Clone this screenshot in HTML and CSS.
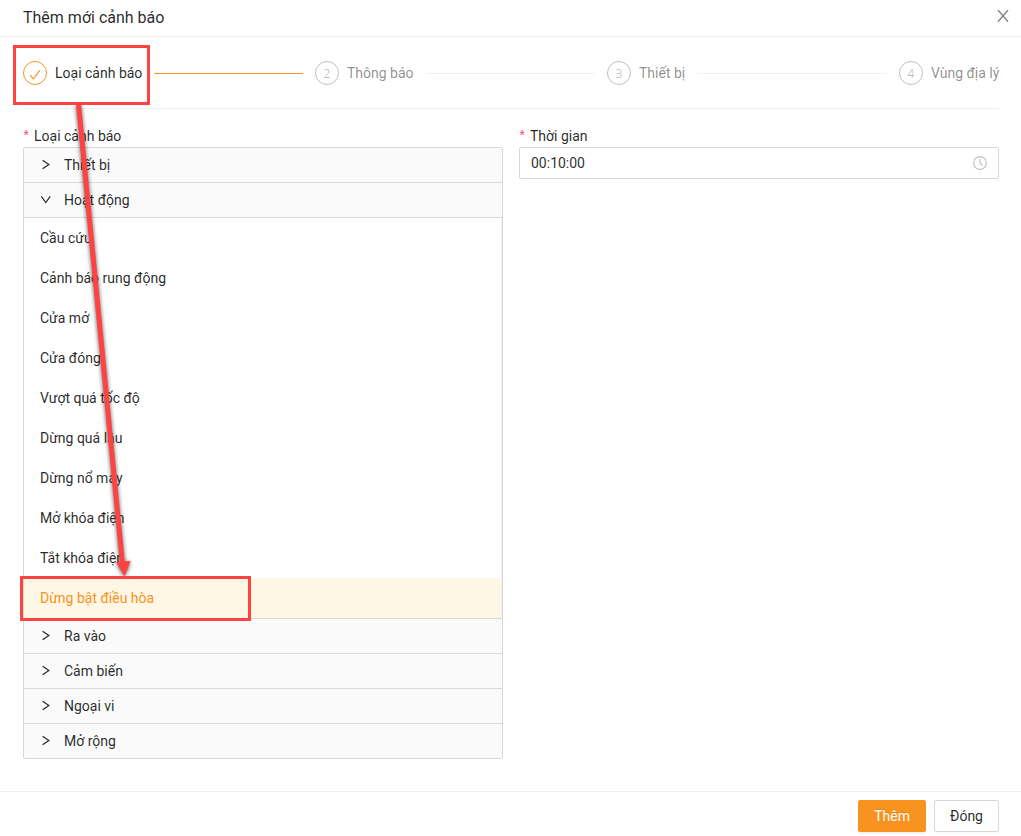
FILE: index.html
```html
<!DOCTYPE html>
<html lang="vi">
<head>
<meta charset="utf-8">
<title>Thêm mới cảnh báo</title>
<link rel="stylesheet" href="styles.css">
</head>
<body>
<svg class="defs" aria-hidden="true">
  <symbol id="right" viewBox="0 0 12 12"><path d="M2.6 1.3 8.9 5.5 2.6 9.8" fill="none" stroke="currentColor" stroke-width="1.15"/></symbol>
  <symbol id="down" viewBox="0 0 12 12"><path d="M1.3 2.4 5.8 8.5 10.3 2.4" fill="none" stroke="currentColor" stroke-width="1.15"/></symbol>
</svg>
<div class="modal">
  <header class="header">
    <h1 class="title">Thêm mới cảnh báo</h1>
    <svg class="close" width="12" height="13" viewBox="0 0 12 13"><path d="M1 0 11 11.8M11 0 1 11.8" fill="none" stroke="currentColor" stroke-width="1.4"/></svg>
  </header>
  <main class="body">
    <div class="steps">
      <div class="step step-active">
        <span class="step-icon"><svg width="12" height="12" viewBox="0 0 12 12"><path d="M1 7.1 4.3 10.9 10.9 2.3" fill="none" stroke="currentColor" stroke-width="1.15"/></svg></span>
        <span class="step-title">Loại cảnh báo</span><span class="step-tail"></span>
      </div>
      <div class="step"><span class="step-icon">2</span><span class="step-title">Thông báo</span><span class="step-tail"></span></div>
      <div class="step"><span class="step-icon">3</span><span class="step-title">Thiết bị</span><span class="step-tail"></span></div>
      <div class="step step-last"><span class="step-icon">4</span><span class="step-title">Vùng địa lý</span></div>
    </div>
    <div class="form">
      <div class="field">
        <div class="label"><span class="required">*</span>Loại cảnh báo</div>
        <div class="collapse">
          <div class="panel"><svg class="arrow"><use href="#right"/></svg>Thiết bị</div>
          <div class="panel"><svg class="arrow"><use href="#down"/></svg>Hoạt động</div>
          <ul class="menu">
            <li class="item">Cầu cứu</li>
            <li class="item">Cảnh báo rung động</li>
            <li class="item">Cửa mở</li>
            <li class="item">Cửa đóng</li>
            <li class="item">Vượt quá tốc độ</li>
            <li class="item">Dừng quá lâu</li>
            <li class="item">Dừng nổ máy</li>
            <li class="item">Mở khóa điện</li>
            <li class="item">Tắt khóa điện</li>
            <li class="item item-selected">Dừng bật điều hòa</li>
          </ul>
          <div class="panel"><svg class="arrow"><use href="#right"/></svg>Ra vào</div>
          <div class="panel"><svg class="arrow"><use href="#right"/></svg>Cảm biến</div>
          <div class="panel"><svg class="arrow"><use href="#right"/></svg>Ngoại vi</div>
          <div class="panel"><svg class="arrow"><use href="#right"/></svg>Mở rộng</div>
        </div>
      </div>
      <div class="field">
        <div class="label"><span class="required">*</span>Thời gian</div>
        <div class="time">00:10:00
          <svg width="14" height="14" viewBox="0 0 14 14"><g fill="none" stroke="currentColor" stroke-width="1.1"><circle cx="7" cy="7" r="6.4"/><path d="M7 3.2V7.3L9.7 9.3"/></g></svg>
        </div>
      </div>
    </div>
  </main>
  <footer class="footer">
    <button class="btn btn-primary">Thêm</button>
    <button class="btn">Đóng</button>
  </footer>
</div>
<svg class="annotation" width="1021" height="836" viewBox="0 0 1021 836">
  <g class="arrow-mark"><path d="M78.5 104 122.3 562" stroke="#ff4242" stroke-width="5"/><path d="M116 562 130.5 561 124.5 576.5Z" fill="#ff4242"/></g>
  <g fill="none" stroke="#ff4242" stroke-width="3"><rect x="14.5" y="46.5" width="134" height="57"/><rect x="21.5" y="577.5" width="228" height="42"/></g>
</svg>
</body>
</html>
```
FILE: styles.css
```css
* { box-sizing: border-box; }
body {
  margin: 0;
  background: #fff;
  color: rgba(0, 0, 0, .85);
  font: 14px/22px Roboto, "Noto Sans", sans-serif;
}
.defs { position: absolute; width: 0; height: 0; }
.modal { display: flex; flex-direction: column; height: 836px; overflow: hidden; }
.header {
  display: flex;
  flex: none;
  justify-content: space-between;
  align-items: flex-start;
  height: 37px;
  padding: 7px 12px 0 23px;
  border-bottom: 1px solid #f0f0f0;
}
.title { margin: 0; font-size: 16px; font-weight: 400; line-height: 22px; }
.close { margin-top: 3px; color: #858585; }
.body { flex: 1; padding: 0 22px 0 23px; }
.steps {
  display: flex;
  height: 72px;
  padding-top: 24px;
  border-bottom: 1px solid #f0f0f0;
}
.step { display: flex; flex: none; width: 292px; height: 24px; align-items: center; color: rgba(0, 0, 0, .45); }
.step-last { width: auto; }
.step-icon {
  display: flex;
  flex: none;
  align-items: center;
  justify-content: center;
  width: 24px;
  height: 24px;
  margin-right: 8px;
  padding-top: 1px;
  border: 1px solid rgba(0, 0, 0, .25);
  border-radius: 50%;
  color: rgba(0, 0, 0, .25);
  font: 12px/22px "Open Sans", sans-serif;
}
.step-title { white-space: nowrap; }
.step-tail { flex: 1; height: 1px; margin: 1px 12px 0; background: #f0f0f0; }
.step-active { color: rgba(0, 0, 0, .85); }
.step-active .step-icon { padding-top: 2px; border-color: #f7931e; color: #f7931e; }
.step-active .step-tail { background: #f7931e; }
.form { display: grid; grid-template-columns: 480px 480px; gap: 16px; padding-top: 16px; }
.label { display: flex; height: 22px; }
.required {
  width: 8px;
  margin-right: 4px;
  margin-left: -1px;
  padding-top: 1px;
  color: #ff4d4f;
  font: 14px/22px "Liberation Mono", monospace;
}
.collapse { border: 1px solid #d9d9d9; border-radius: 2px; background: #fafafa; }
.panel { display: flex; align-items: center; height: 35px; padding-left: 16px; border-bottom: 1px solid #d9d9d9; }
.panel:last-child { height: 34px; border-bottom: 0; }
.arrow { width: 12px; height: 12px; margin: 0 12px 0 0; }
.menu { margin: 0; padding: 0; list-style: none; background: #fff; border-bottom: 1px solid #d9d9d9; border-right: 1px solid #f0f0f0; }
.item { height: 40px; padding-left: 16px; line-height: 40px; }
.item-selected { background: #fff7e6; color: #f7931e; }
.time {
  display: flex;
  align-items: center;
  justify-content: space-between;
  height: 32px;
  padding: 0 11px;
  border: 1px solid #d9d9d9;
  border-radius: 2px;
}
.time svg { color: rgba(0, 0, 0, .25); }
.footer {
  display: flex;
  flex: none;
  justify-content: flex-end;
  gap: 8px;
  height: 45px;
  padding: 8px 22px 0 0;
  border-top: 1px solid #f0f0f0;
}
.btn {
  height: 32px;
  padding: 0 15px;
  border: 1px solid #d9d9d9;
  border-radius: 2px;
  background: #fff;
  box-shadow: 0 2px 0 rgba(0, 0, 0, .015);
  color: rgba(0, 0, 0, .85);
  font: inherit;
}
.btn-primary {
  border-color: #f7931e;
  background: #f7931e;
  box-shadow: 0 2px 0 rgba(0, 0, 0, .045);
  color: #fff;
  text-shadow: 0 -1px 0 rgba(0, 0, 0, .12);
}
.annotation { position: absolute; top: 0; left: 0; pointer-events: none; }
.arrow-mark { filter: drop-shadow(0 1px 2px rgba(0, 0, 0, .65)); }
```
